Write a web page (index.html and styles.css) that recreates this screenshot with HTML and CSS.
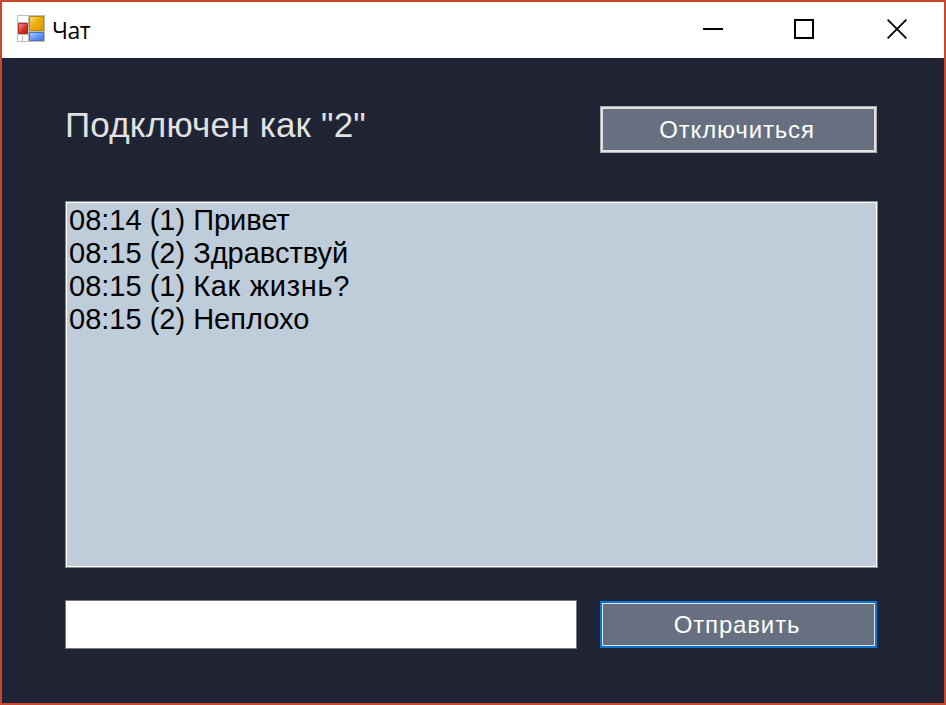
FILE: index.html
```html
<!DOCTYPE html>
<html lang="ru">
<head>
<meta charset="utf-8">
<title>Чат</title>
<link rel="stylesheet" href="styles.css">
</head>
<body>
<div class="window">
  <header class="titlebar">
    <svg class="app-icon" width="28" height="28" viewBox="0 0 28 28">
      <defs>
        <linearGradient id="gold" x1="0" y1="0" x2="1" y2="1"><stop offset="0" stop-color="#fbe17c"/><stop offset=".45" stop-color="#ecae0c"/><stop offset="1" stop-color="#dc9c00"/></linearGradient>
        <linearGradient id="red" x1="0" y1="0" x2="1" y2="1"><stop offset="0" stop-color="#f59a8e"/><stop offset=".6" stop-color="#cf3029"/><stop offset="1" stop-color="#b51b18"/></linearGradient>
        <linearGradient id="blue" x1="0" y1="0" x2="1" y2="1"><stop offset="0" stop-color="#a9c9ff"/><stop offset=".6" stop-color="#5b92f2"/><stop offset="1" stop-color="#3b70dc"/></linearGradient>
      </defs>
      <path fill="#bdbdbd" d="M0 0h28v27H0z"/>
      <path fill="#fff" d="M1 1h10v6H1zM1 20h4v6H1zM6 20h5v6H6z"/>
      <path fill="url(#gold)" stroke="#b58a08" d="M12.5 1.500h14v14h-14z"/>
      <path fill="url(#red)" stroke="#b02a20" d="M1.500 8.500h9v10h-9z"/>
      <path fill="url(#blue)" stroke="#4674c8" d="M12.500 17.500h14v8h-14z"/>
    </svg>
    <h1 class="title">Чат</h1>
    <div class="controls">
      <svg width="20" height="20" viewBox="0 0 20 20"><path fill="#000" d="M0 9h20v2H0z"/></svg>
      <svg width="20" height="20" viewBox="0 0 20 20"><path fill="none" stroke="#000" stroke-width="2" d="M1 1h18v18H1z"/></svg>
      <svg width="20" height="20" viewBox="0 0 20 20"><path fill="none" stroke="#000" stroke-width="1.800" d="M.6.6l18.800 18.800M19.400.6L.6 19.400"/></svg>
    </div>
  </header>
  <main class="client">
    <div class="row status-row">
      <p class="status">Подключен как "2"</p>
      <button class="button">Отключиться</button>
    </div>
    <ul class="messages">
      <li>08:14 (1) Привет</li>
      <li>08:15 (2) Здравствуй</li>
      <li>08:15 (1) <span class="wide">Как жизнь?</span></li>
      <li>08:15 (2) Неплохо</li>
    </ul>
    <div class="row">
      <input class="entry" type="text" aria-label="Сообщение">
      <button class="button default">Отправить</button>
    </div>
  </main>
</div>
</body>
</html>
```

FILE: styles.css
```css
* { box-sizing: border-box; }
body { margin: 0; font-family: "Liberation Sans", Arial, sans-serif; }
.window {
  width: 946px;
  height: 705px;
  border: 2px solid #c9492f;
  background: #202333;
  overflow: hidden;
}
.titlebar {
  height: 56px;
  display: flex;
  align-items: center;
  background: #fff;
  padding: 0 37px 2px 15px;
}
.app-icon { display: block; }
.title {
  margin: 2px 0 0 7px;
  font: 400 23px/30px "Open Sans", "Segoe UI", sans-serif;
  letter-spacing: -.5px;
  color: #000;
}
.controls { margin-left: auto; display: flex; gap: 71px; }
.controls svg { display: block; }
.controls svg:last-child { margin-left: 2px; }
.client { padding: 48px 66px 0 63px; }
.row { display: flex; justify-content: space-between; }
.status-row { height: 47px; margin-bottom: 48px; padding-right: 1px; }
.status {
  margin: -1px 0 0;
  font-size: 35px;
  line-height: 40px;
  letter-spacing: .2px;
  color: #e1e1e1;
  white-space: nowrap;
}
.button {
  width: 277px;
  height: 47px;
  padding: 0 3px 0 0;
  border: 1px solid #adadad;
  box-shadow: inset 0 0 0 2px #e1e1e1;
  background: #667081;
  color: #fff;
  font: 24px/28px "Liberation Sans", Arial, sans-serif;
  letter-spacing: .85px;
}
.button.default {
  margin: 1px 1px 0 0;
  border: 2px solid #0078d7;
  box-shadow: inset 0 0 0 1px #e1e1e1;
}
.messages {
  list-style: none;
  width: 813px;
  height: 367px;
  margin: 0 0 32px;
  padding: 2px;
  border: 1px solid #828790;
  box-shadow: inset 0 0 0 1px #fff;
  background: #bfccda;
  color: #000;
  font-size: 29px;
  line-height: 33px;
}
.messages li { padding-left: 1px; white-space: nowrap; }
.messages .wide { letter-spacing: .7px; }
.entry {
  width: 512px;
  height: 49px;
  padding: 0 6px;
  border: 1px solid #7a7a7a;
  background: #fff;
  font: 29px "Liberation Sans", Arial, sans-serif;
  outline: none;
}
```
